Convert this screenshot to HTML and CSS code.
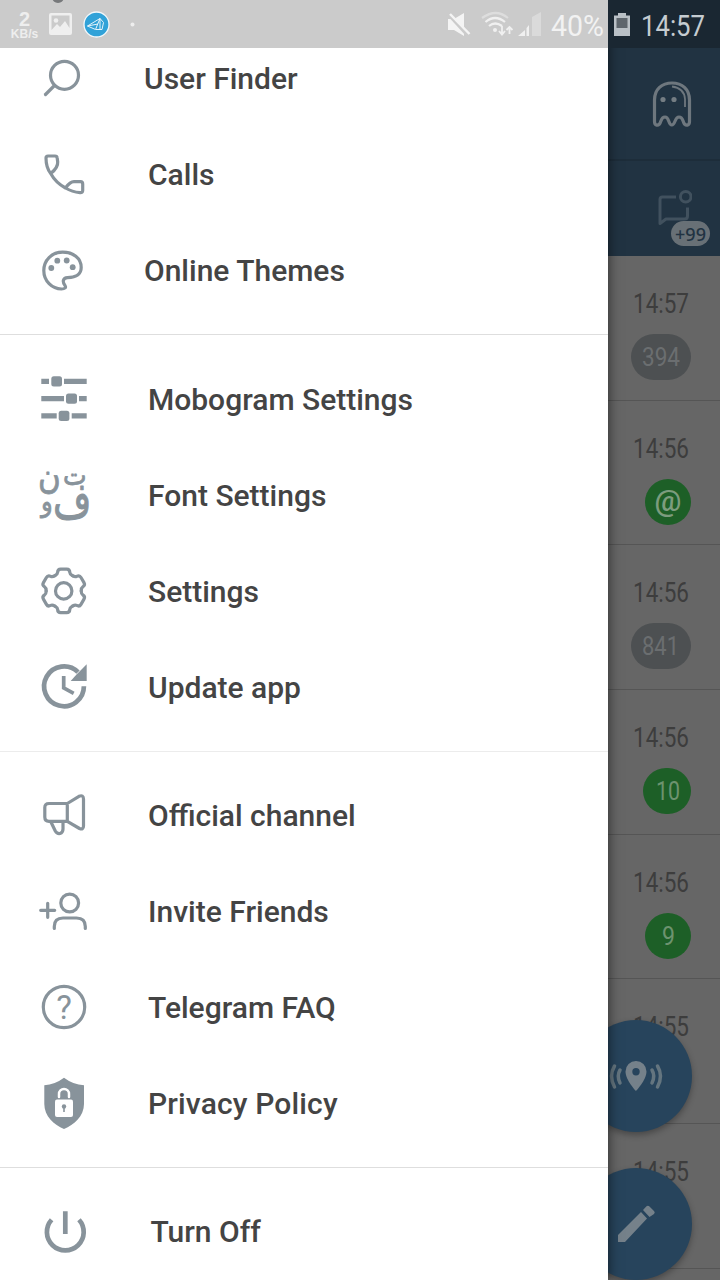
FILE: index.html
```html
<!DOCTYPE html>
<html lang="en">
<head>
<meta charset="utf-8">
<title>Mobogram</title>
<link rel="stylesheet" href="styles.css">
</head>
<body>
<div class="screen">
  <div class="app">
    <div class="statusbar-dark"></div>
    <div class="toolbar">
      <svg class="ghost" width="44" height="50" viewBox="0 0 44 50"><path d="M4.500 25V21C4.500 10 12 4 22 4S39.500 10 39.500 21V42.500C39.500 46.500 36.500 47 34.500 45C32.500 43 33.500 38 29 38S25.500 46 21.800 46S19.500 38 15 38S11.500 43 9.500 45C7.500 47 4.500 46.500 4.500 42.500Z"/><path class="ghost-shine" d="M22 7.500C30 8.500 34.500 13 35 20V28"/><circle cx="13" cy="20.500" r="2.600"/><circle cx="24" cy="20.500" r="2.600"/></svg>
    </div>
    <div class="tabs">
      <div class="tab">
        <svg width="36" height="38" viewBox="0 0 36 38"><path d="M20 8H6.500Q4 8 4 10.500V34.500L10 30H28.500Q31.500 30 31.500 27V18.500"/><circle cx="29.700" cy="7.700" r="5.300"/></svg>
        <span class="tab-badge">+99</span>
      </div>
    </div>
    <div class="chats">
      <div class="chat"><svg class="time" viewBox="0 0 60 40"><text x="2" y="30" textLength="56" lengthAdjust="spacingAndGlyphs">14:57</text></svg><div class="badge muted"><svg viewBox="0 0 60 46"><text x="11" y="32" textLength="38" lengthAdjust="spacingAndGlyphs">394</text></svg></div></div>
      <div class="chat"><svg class="time" viewBox="0 0 60 40"><text x="2" y="30" textLength="56" lengthAdjust="spacingAndGlyphs">14:56</text></svg><div class="badge round"><span class="mention">@</span></div></div>
      <div class="chat"><svg class="time" viewBox="0 0 60 40"><text x="2" y="30" textLength="56" lengthAdjust="spacingAndGlyphs">14:56</text></svg><div class="badge muted"><svg viewBox="0 0 60 46"><text x="11" y="32" textLength="37" lengthAdjust="spacingAndGlyphs">841</text></svg></div></div>
      <div class="chat"><svg class="time" viewBox="0 0 60 40"><text x="2" y="30" textLength="56" lengthAdjust="spacingAndGlyphs">14:56</text></svg><div class="badge ten"><svg viewBox="0 0 48 46"><text x="13" y="32" textLength="24" lengthAdjust="spacingAndGlyphs">10</text></svg></div></div>
      <div class="chat"><svg class="time" viewBox="0 0 60 40"><text x="2" y="30" textLength="56" lengthAdjust="spacingAndGlyphs">14:56</text></svg><div class="badge round"><svg viewBox="0 0 46 46"><text x="17" y="32" textLength="13" lengthAdjust="spacingAndGlyphs">9</text></svg></div></div>
      <div class="chat"><svg class="time" viewBox="0 0 60 40"><text x="2" y="30" textLength="56" lengthAdjust="spacingAndGlyphs">14:55</text></svg></div>
      <div class="chat"><svg class="time" viewBox="0 0 60 40"><text x="2" y="30" textLength="56" lengthAdjust="spacingAndGlyphs">14:55</text></svg></div>
    </div>
    <div class="fabs">
      <div class="fab"><svg width="60" height="40" viewBox="0 0 60 40"><path class="solid" fill-rule="evenodd" d="M30 5A10.500 10.500 0 0 0 19.500 15.500C19.500 24 30 35 30 35S40.500 24 40.500 15.500A10.500 10.500 0 0 0 30 5ZM30 12A3.700 3.700 0 1 1 30 19.400A3.700 3.700 0 0 1 30 12Z"/><path d="M14 14Q10.500 20 14 27M8.500 10Q2.500 20 8.500 31M46 14Q49.500 20 46 27M51.500 10Q57.500 20 51.500 31"/></svg></div>
      <div class="fab"><svg width="48" height="48" viewBox="0 0 48 48"><path class="solid" d="M6 35L29 12L35 18.500L13 42H6ZM31 10L34.500 6.200Q36 5 37.500 6.500L42 11Q43.500 12.500 42 14L37.500 17Z"/></svg></div>
    </div>
  </div>

  <div class="drawer">
    <div class="section">
      <div class="item finder"><svg viewBox="0 0 56 56"><circle cx="28.500" cy="24.300" r="14"/><path d="M18.500 34.500L9.500 43.500"/></svg><span>User Finder</span></div>
      <div class="item"><svg viewBox="0 0 56 56"><path d="M14.700 26.500C11.500 22.500 10 16 10 11Q10 9 12 9H19Q21 9 21.200 11L21.700 15C22 19 18.500 23.500 14.700 26.500C18 32.500 23 37.500 29.500 41C34.500 44 39 45.200 44 45.600Q46.700 45.800 46.700 43.500V37Q46.700 34.700 44.500 34.700H38C35 34.700 32 37.500 29.500 41"/></svg><span>Calls</span></div>
      <div class="item themes"><svg viewBox="0 0 56 56"><path d="M26.700 9.200C15.500 9.200 7.800 17.500 7.800 27.500C7.800 38 16 46 25.500 46C29 46 30.300 44.500 29 42.500C26 38.500 27 35 31.500 34.700C38 34.300 45.200 33 45.200 24.500C45.200 15 37 9.200 26.700 9.200Z"/><g class="solid"><circle cx="15.300" cy="25" r="2.900"/><circle cx="21.300" cy="17.700" r="2.900"/><circle cx="30.700" cy="17.500" r="2.900"/><circle cx="36.700" cy="24.200" r="2.900"/></g></svg><span>Online Themes</span></div>
    </div>
    <div class="section second">
      <div class="item"><svg viewBox="0 0 56 56"><g class="solid"><path d="M5.300 6.700H13V12H5.300ZM28 6.700H50.700V12H28ZM5.300 24H28V29.300H5.300ZM43 24H50.700V29.300H43ZM5.300 41.300H20.700V46.600H5.300ZM35.700 41.300H50.700V46.600H35.700Z"/><rect x="15.300" y="4.200" width="10.700" height="10.200" rx="2.500"/><rect x="30" y="21.500" width="11" height="10.200" rx="2.500"/><rect x="22.700" y="38.800" width="10.700" height="10.200" rx="2.500"/></g></svg><span>Mobogram Settings</span></div>
      <div class="item"><svg viewBox="0 0 56 56" class="letters"><text transform="translate(2 19.500) scale(1 1.150)" font-size="31">ن</text><text transform="translate(27 17) scale(1 1.150)" font-size="25">ت</text><text transform="translate(5 43) scale(.9 1.100)" font-size="27">و</text><text transform="translate(17 50) scale(1 1.350)" font-size="37">ف</text></svg><span>Font Settings</span></div>
      <div class="item"><svg viewBox="0 0 56 56"><defs><path id="tooth" d="M-8.750 -15.200Q-6.150 -16.700 -6.100 -18.500Q-6 -21.700 -3 -21.700H3Q6 -21.700 6.100 -18.500Q6.150 -16.700 8.750 -15.200"/></defs><g transform="translate(27.700 26.900)"><circle r="8.200"/><use href="#tooth"/><use href="#tooth" transform="rotate(60)"/><use href="#tooth" transform="rotate(120)"/><use href="#tooth" transform="rotate(180)"/><use href="#tooth" transform="rotate(240)"/><use href="#tooth" transform="rotate(300)"/></g></svg><span>Settings</span></div>
      <div class="item"><svg viewBox="0 0 56 56"><path class="butt w5" d="M47.900 26.300A19.900 19.900 0 1 1 42 12.200"/><path class="solid" d="M50.700 4.300V21H34.700L40.500 14.500L42.500 12.500Z"/><path class="butt w4" d="M27.700 16V28L37.700 33.300"/></svg><span>Update app</span></div>
    </div>
    <div class="section third">
      <div class="item"><svg viewBox="0 0 56 56"><path d="M31.300 15.500H13Q8.800 15.500 8.800 19.500V29Q8.800 33.300 13 33.300H31.300ZM31.300 15.500L43 8.300Q47.500 6.500 47.500 11V38Q47.500 42 43.500 40.500L31.300 33.300M14.700 33.500L19.300 43Q21 46 24 45.500Q27 44.500 27 41V33.500"/></svg><span>Official channel</span></div>
      <div class="item"><svg viewBox="0 0 56 56"><circle cx="33.700" cy="19" r="8.900"/><path d="M4.700 26.300H18.700M11.700 19.300V33.300M18.300 44.500V42.500Q18.300 34 27 34H40.500Q49.300 34 49.300 42.500V44.500"/></svg><span>Invite Friends</span></div>
      <div class="item"><svg viewBox="0 0 56 56" class="faq"><circle cx="28" cy="27" r="20.700"/><text x="28" y="38.500" text-anchor="middle" font-size="33">?</text></svg><span>Telegram FAQ</span></div>
      <div class="item"><svg viewBox="0 0 56 56"><path class="solid" d="M28 1.700Q37 8.500 48 9.300V28C48 40 38 49 28 53C18 49 8.300 40 8.300 28V9.300Q19 8.500 28 1.700Z"/><path class="shackle" d="M23 21V18A5 5 0 0 1 33 18V21"/><rect class="lock" x="19" y="23.500" width="18" height="17.500" rx="2"/><circle class="solid" cx="28" cy="30.500" r="2.200"/><path class="solid" d="M27.200 30H28.800V36H27.200Z"/></svg><span class="wide">Privacy Policy</span></div>
    </div>
    <div class="section last">
      <div class="item off"><svg viewBox="0 0 56 56"><path class="butt w5" d="M15.600 15.700A18.400 18.400 0 1 0 43 15.700M29.300 7.300V30"/></svg><span>Turn Off</span></div>
    </div>
  </div>

  <div class="statusbar">
    <div class="speed"><span class="speed-n">2</span><span class="speed-u">KB/s</span></div>
    <svg class="notices" width="100" height="48" viewBox="0 0 100 48"><circle cx="18" cy="-3" r="6" fill="#77797b"/><path fill="#efefef" fill-rule="evenodd" d="M11 13H30Q32 13 32 15V33Q32 35 30 35H11Q9 35 9 33V15Q9 13 11 13ZM11.500 15.500V30L17 24L20 27L25 21L29.500 28V15.500Z"/><circle cx="16" cy="20.500" r="2.300" fill="#efefef"/><circle cx="56.500" cy="24.500" r="12.500" fill="#31a2d8" stroke="#f2f8fb" stroke-width="1.300"/><path d="M47.500 26L60 18.500L55.500 29.500ZM60 18.500L63.500 22.500L62 29.500H56M60 18.500V29.500M47.500 26L58 24" fill="none" stroke="#e4f4fb" stroke-width="1"/><circle cx="92.500" cy="24.500" r="2" fill="#eee"/></svg>
    <svg class="system" width="280" height="48" viewBox="440 0 280 48">
      <g fill="#f4f4f4"><path d="M448 19H454L464 13V36L454 30H448Z"/><path d="M447 13L468 36" stroke="#cbcbcb" stroke-width="3"/><path d="M450 14L469.500 34" stroke="#f4f4f4" stroke-width="2.500"/></g>
      <g fill="none" stroke="#f0f0f0" stroke-width="2.200"><path d="M482 18Q496 8 508 18" opacity=".5"/><path d="M485.500 22Q495 14 505 22M489 26Q495 21 502 26"/></g>
      <circle cx="495" cy="30" r="2" fill="#f0f0f0"/><path d="M502 26V33M499 31L502 34.500L505 31M509.500 34V28M506.500 30L509.500 27L512.500 30" fill="none" stroke="#f0f0f0" stroke-width="1.800"/>
      <path d="M518 36L525 30V36ZM526.500 28L529 25V36H526.500Z" fill="#f0f0f0"/><path d="M532 17L541 12V36H532Z" fill="#dadada"/>
      <text x="551" y="36" textLength="53" lengthAdjust="spacingAndGlyphs" fill="#f2f2f2">40%</text>
      <path d="M618 13H626V15.500H630V36H614V15.500H618Z" fill="#b9c0c6"/><path d="M616.500 18H627.500V28H616.500Z" fill="#5e666d"/>
      <text x="641" y="36" textLength="64" lengthAdjust="spacingAndGlyphs" fill="#c5ccd1">14:57</text>
    </svg>
  </div>
</div>
</body>
</html>
```
FILE: styles.css
```css
* { box-sizing: border-box; }
body { margin: 0; font-family: Roboto, "Liberation Sans", sans-serif; }
.screen { position: relative; width: 720px; height: 1280px; overflow: hidden; background: #666; }
svg { display: block; flex: none; }

/* Dimmed chat list behind the drawer */
.app { display: flex; flex-direction: column; height: 1280px; overflow: hidden; }
.statusbar-dark { flex: none; height: 48px; background: #1a2732; }
.toolbar { flex: none; height: 113px; background: #213342; border-bottom: 2px solid #1d2d3a; display: flex; justify-content: flex-end; align-items: center; padding: 0 26px 0 0; }
.ghost path { fill: none; stroke: #6e777e; stroke-width: 3.200; stroke-linejoin: round; }
.ghost .ghost-shine { stroke-width: 1.800; }
.ghost circle { fill: #747d83; }
.tabs { flex: none; height: 95px; background: #213342; display: flex; justify-content: flex-end; padding: 28px 28px 0 0; }
.tab { position: relative; width: 36px; height: 38px; }
.tab path, .tab circle { fill: none; stroke: #41515e; stroke-width: 3; stroke-linejoin: round; }
.tab-badge { position: absolute; left: 15px; top: 32px; width: 39px; height: 25px; border-radius: 13px; background: #687076; color: #213342; font: 500 18px/26px "Noto Sans", sans-serif; text-align: center; }
.chats { flex: none; }
.chat { height: 144.700px; border-bottom: 1px solid #555; padding: 27px 29px 0 0; display: flex; flex-direction: column; align-items: flex-end; gap: 11px; }
.time { width: 60px; height: 40px; overflow: visible; }
.chat text, .system text { font-family: Roboto, sans-serif; font-weight: 400; }
.time text { font-size: 27px; fill: #3d3d3d; }
.badge { height: 46px; border-radius: 23px; background: #1d5f27; display: flex; align-items: center; justify-content: center; }
.badge svg { width: 100%; height: 46px; }
.badge text { font-size: 26px; fill: #6d936f; }
.round { width: 46px; }
.ten { width: 48px; }
.muted { width: 60px; background: #4d5052; }
.muted text { fill: #6b6e70; }
.mention { color: #7c9c7e; font: 500 30px/40px Roboto, sans-serif; padding-bottom: 1px; }
.fabs { position: absolute; left: 580px; top: 1020px; display: flex; flex-direction: column; gap: 36px; }
.fab { width: 112px; height: 112px; border-radius: 50%; background: #27445c; box-shadow: 0 3px 6px rgba(0,0,0,.3); display: flex; align-items: center; justify-content: center; }
.fab path { fill: none; stroke: #64757f; stroke-width: 3.500; stroke-linecap: round; }
.fab .solid { fill: #75818a; stroke: none; }

/* Navigation drawer */
.drawer { position: absolute; left: 0; top: 0; width: 608px; height: 1280px; padding-top: 15px; background: #fff; box-shadow: 0 0 12px rgba(0,0,0,.6); }
.section { padding: 16px 0 15px; border-bottom: 1px solid #dedede; }
.section.second { padding-top: 17px; border-color: #ececec; }
.section.last { border: 0; }
.item { height: 96px; padding-left: 36px; display: flex; align-items: center; gap: 56px; color: #444; font-size: 30px; font-weight: 500; white-space: nowrap; }
.item span { padding-bottom: 2px; }
.third .item span, .last .item span { padding-bottom: 1px; }
.item .wide { letter-spacing: .15px; }
.item.finder, .item.themes { gap: 52px; }
.item.off { gap: 58.500px; }
.item svg { width: 56px; height: 56px; fill: none; stroke: #88939b; stroke-width: 3.200; stroke-linecap: round; stroke-linejoin: round; }
.item .solid { fill: #88939b; stroke: none; }
.item .butt { stroke-linecap: butt; stroke-linejoin: miter; }
.item .w5 { stroke-width: 4.700; }
.item .w4 { stroke-width: 3.700; }
.item .shackle { stroke: #fff; stroke-width: 2.500; }
.item .lock { fill: #fff; stroke: none; }
.letters text { fill: #88939b; stroke: #88939b; stroke-width: .7; font-family: "DejaVu Sans", sans-serif; font-weight: 400; }
.faq text { fill: #88939b; stroke: none; font-weight: 400; }

/* System status bar */
.statusbar { position: absolute; left: 0; top: 0; width: 720px; height: 48px; display: flex; background: linear-gradient(to right, #cbcbcb 608px, #1a2732 608px); }
.speed { width: 40px; padding: 10px 0 0 9px; display: flex; flex-direction: column; align-items: center; color: #eee; font-family: "Liberation Sans", sans-serif; font-weight: 700; }
.speed-n { font-size: 20px; line-height: 18px; }
.speed-u { font-size: 12px; line-height: 13px; }
.system { margin-left: auto; }
.system text { font-size: 30px; }
```
